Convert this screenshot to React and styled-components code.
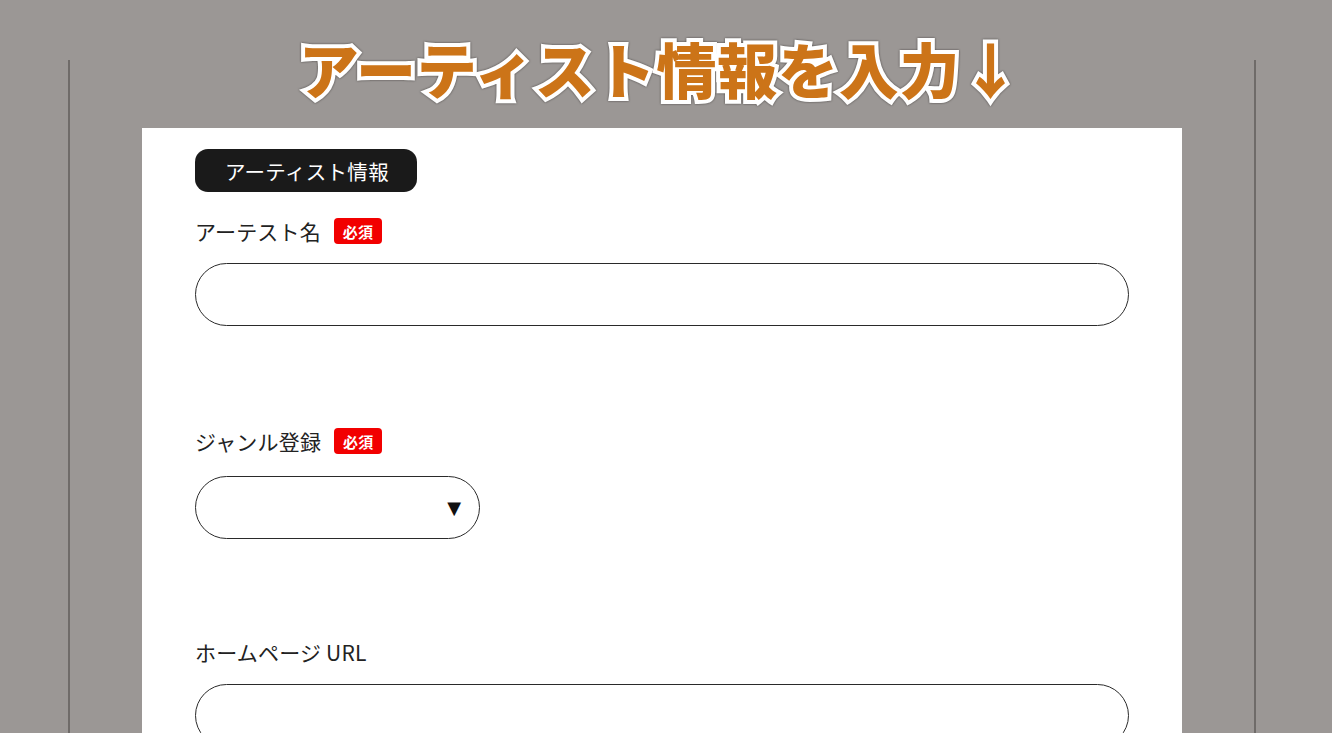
import React from 'react';
import styled, { createGlobalStyle } from 'styled-components';

const GlobalStyle = createGlobalStyle`
    html, body {
        margin: 0;
        padding: 0;
        background: #9b9795;
        font-family: "Noto Sans CJK JP", "Noto Sans", sans-serif;
    }
`;

export default function App() {
    const fields = [
        { label: 'アーテスト名', required: true, kind: 'text' },
        { label: 'ジャンル登録', required: true, kind: 'select' },
        { label: 'ホームページ URL', required: false, kind: 'text' },
    ];

    return (
        <>
            <GlobalStyle />
            <Page>
                <Frame>
                    <Title>アーティスト情報を入力↓</Title>
                    <Panel>
                        <Section>アーティスト情報</Section>
                        {fields.map((f) => (
                            <Field key={f.label} $select={f.kind === 'select'}>
                                <Label>
                                    {f.label}
                                    {f.required && <Required>必須</Required>}
                                </Label>
                                {f.kind === 'select' ? (
                                    <SelectBox>
                                        <Arrow>▼</Arrow>
                                    </SelectBox>
                                ) : (
                                    <Input type="text" />
                                )}
                            </Field>
                        ))}
                    </Panel>
                </Frame>
            </Page>
        </>
    );
}

const Page = styled.div`
    width: 1332px;
    height: 733px;
    overflow: hidden;
    padding-top: 60px;
    box-sizing: border-box;
`;
const Frame = styled.div`
    margin-left: 68px;
    width: 1188px;
    min-height: 800px;
    box-sizing: border-box;
    border-left: 2px solid #6f6b69;
    border-right: 2px solid #6f6b69;
    display: flex;
    flex-direction: column;
    align-items: center;
`;
const Title = styled.h1`
    margin: -22px 0 0;
    height: 90px;
    font-size: 60px;
    font-weight: 900;
    line-height: 1;
    letter-spacing: 0.8px;
    color: #cc7418;
    -webkit-text-stroke: 8px #fff;
    paint-order: stroke fill;
    filter: drop-shadow(0 0 1px #4a4644);
    transform: translateX(-2px);
`;
const Panel = styled.div`
    width: 1040px;
    min-height: 700px;
    background: #fff;
    box-sizing: border-box;
    padding: 21px 52px 0 53px;
`;
const Section = styled.div`
    display: inline-flex;
    align-items: center;
    height: 43px;
    padding: 0 28px 0 30px;
    border-radius: 13px;
    background: #1a1a1a;
    color: #fff;
    font-size: 20.5px;
    letter-spacing: 0.3px;
`;
const Field = styled.div`
    margin-top: 25px;
    margin-bottom: ${(p) => (p.$select ? '99px' : '101px')};
`;
const Label = styled.div`
    display: flex;
    align-items: center;
    height: 28px;
    font-size: 21px;
    color: #222;
    letter-spacing: 0.2px;
`;
const Required = styled.span`
    display: inline-flex;
    align-items: center;
    justify-content: center;
    margin-left: 13px;
    width: 48px;
    height: 26px;
    border-radius: 4px;
    background: #f20000;
    color: #fff;
    font-size: 15px;
    font-weight: 700;
`;
const Input = styled.input`
    display: block;
    margin-top: 18px;
    width: 934px;
    height: 63px;
    box-sizing: border-box;
    border: 1.5px solid #2a2a2a;
    border-radius: 32px;
    background: #fff;
    outline: none;
`;
const SelectBox = styled.div`
    margin-top: 21px;
    width: 285px;
    height: 63px;
    box-sizing: border-box;
    border: 1.5px solid #2a2a2a;
    border-radius: 32px;
    display: flex;
    align-items: center;
    justify-content: flex-end;
    padding-right: 18px;
`;
const Arrow = styled.span`
    font-size: 18px;
    color: #111;
    font-family: "DejaVu Sans", sans-serif;
`;
